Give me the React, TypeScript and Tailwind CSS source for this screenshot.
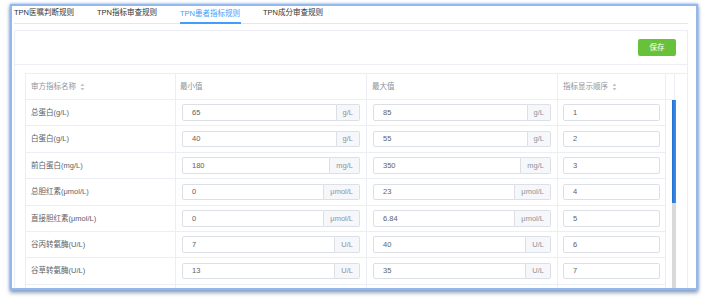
import React from "react";

const rows = [
  { name: "总蛋白(g/L)", min: "65", max: "85", unit: "g/L", order: "1" },
  { name: "白蛋白(g/L)", min: "40", max: "55", unit: "g/L", order: "2" },
  { name: "前白蛋白(mg/L)", min: "180", max: "350", unit: "mg/L", order: "3" },
  { name: "总胆红素(μmol/L)", min: "0", max: "23", unit: "μmol/L", order: "4" },
  { name: "直接胆红素(μmol/L)", min: "0", max: "6.84", unit: "μmol/L", order: "5" },
  { name: "谷丙转氨酶(U/L)", min: "7", max: "40", unit: "U/L", order: "6" },
  { name: "谷草转氨酶(U/L)", min: "13", max: "35", unit: "U/L", order: "7" },
  { name: "", min: "", max: "", unit: "", order: "" },
];

const tabs = ["TPN医嘱判断规则", "TPN指标审查规则", "TPN患者指标规则", "TPN成分审查规则"];

function SortIcon() {
  return (
    <svg width="5" height="8" viewBox="0 0 5 8" className="ml-[4px]">
      <path d="M2.5 0.5 L4.5 3 L0.5 3 Z" fill="#c0c4cc" />
      <path d="M2.5 7.5 L4.5 5 L0.5 5 Z" fill="#c0c4cc" />
    </svg>
  );
}

function UnitInput({ value, unit }: { value: string; unit: string }) {
  return (
    <div className="flex h-[16.5px] w-full">
      <div className="flex-1 flex items-center pl-[9px] border border-[#dcdfe6] rounded-l-[2px] text-[#606266] bg-white">
        {value}
      </div>
      <div className="flex items-center px-[6px] bg-[#f5f7fa] border border-l-0 border-[#dcdfe6] rounded-r-[2px] text-[#909399]">
        {unit}
      </div>
    </div>
  );
}

export default function App() {
  return (
    <div
      className="min-h-screen bg-white text-[7.5px] leading-none"
      style={{ fontFamily: '"Liberation Sans", "Noto Sans CJK SC", sans-serif' }}
    >
      <div className="pl-[10px] pt-[4px]">
        <div className="w-[688px] h-[286px] overflow-hidden bg-white border-2 border-[#94b8ea] shadow-[0_0_3px_rgba(90,145,230,0.8),0_3px_4px_rgba(40,60,100,0.45)] pl-[2px] pr-[8px]">
          {/* tabs */}
          <div className="flex h-[18px] border-b border-[#e4e7ed] items-end">
            {tabs.map((t, i) => (
              <div
                key={t}
                className={
                  i === 2
                    ? "w-[61px] mr-[22px] h-[18px] flex items-center whitespace-nowrap text-[#409eff] border-b-2 border-[#409eff] -mb-px pb-[1px]"
                    : "w-[61px] mr-[22px] h-[18px] flex items-center whitespace-nowrap text-[#303133] pb-[2px]"
                }
              >
                {t}
              </div>
            ))}
          </div>

          {/* panel */}
          <div className="mt-[6px] border border-[#ebeef5]">
            <div className="h-[34px] border-b border-[#ebeef5] flex items-center justify-end pr-[11px]">
              <button className="w-[38px] h-[17px] rounded-[2px] bg-[#67c23a] text-white text-[7.5px] flex items-center justify-center">
                保存
              </button>
            </div>

            <div className="pt-[8px] pl-[10px]">
              {/* header */}
              <div className="grid grid-cols-[150px_191px_191px_108px_9px] border-t border-l border-[#ebeef5] text-[#909399]">
                <div className="h-[26px] flex items-center pl-[5px] border-r border-b border-[#ebeef5]">
                  审方指标名称
                  <SortIcon />
                </div>
                <div className="h-[26px] flex items-center pl-[4px] border-r border-b border-[#ebeef5]">最小值</div>
                <div className="h-[26px] flex items-center pl-[5px] border-r border-b border-[#ebeef5]">最大值</div>
                <div className="h-[26px] flex items-center pl-[5px] border-r border-b border-[#ebeef5]">
                  指标显示顺序
                  <SortIcon />
                </div>
                <div className="h-[26px] border-r border-b border-[#ebeef5]" />
              </div>

              {/* body */}
              <div className="flex">
                <div className="grid grid-cols-[150px_191px_191px_108px] border-l border-[#ebeef5] text-[#606266]">
                  {rows.map((r, i) => (
                    <React.Fragment key={i}>
                      <div className="h-[26.4px] flex items-center pl-[5px] border-r border-b border-[#ebeef5]">
                        {r.name}
                      </div>
                      <div className="h-[26.4px] flex items-center px-[6px] border-r border-b border-[#ebeef5]">
                        {r.unit && <UnitInput value={r.min} unit={r.unit} />}
                      </div>
                      <div className="h-[26.4px] flex items-center px-[6px] border-r border-b border-[#ebeef5]">
                        {r.unit && <UnitInput value={r.max} unit={r.unit} />}
                      </div>
                      <div className="h-[26.4px] flex items-center px-[5px] border-r border-b border-[#ebeef5]">
                        {r.order && (
                          <div className="w-full h-[16.5px] flex items-center pl-[9px] border border-[#dcdfe6] rounded-[2px]">
                            {r.order}
                          </div>
                        )}
                      </div>
                    </React.Fragment>
                  ))}
                </div>
                <div className="w-[10px] flex justify-end">
                  <div className="w-[4px] h-[200px] bg-[#d9d9d9] flex flex-col">
                    <div className="h-[103px] bg-gradient-to-r from-[#1e6fd6] to-[#4a90e2]" />
                  </div>
                </div>
              </div>
            </div>
          </div>
        </div>
      </div>
    </div>
  );
}
